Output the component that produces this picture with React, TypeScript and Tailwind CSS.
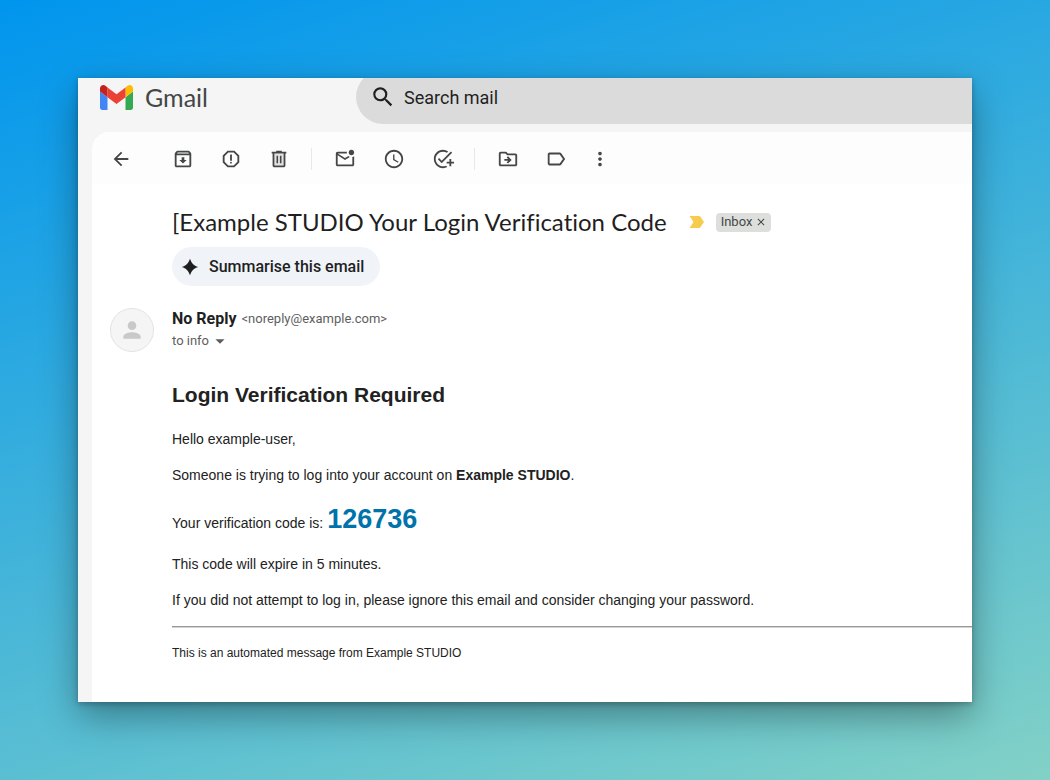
import type { ReactNode } from 'react'
import {
  MdAccessTime,
  MdArrowBack,
  MdArrowDropDown,
  MdClose,
  MdLabelOutline,
  MdMoreVert,
  MdOutlineAddTask,
  MdOutlineArchive,
  MdOutlineDriveFileMove,
  MdOutlineMarkEmailUnread,
  MdOutlineReportGmailerrorred,
  MdPerson,
  MdSearch,
} from 'react-icons/md'

function GmailLogo() {
  return (
    <svg viewBox="52 42 88 66" className="h-[25px] w-[33px]" aria-hidden="true">
      <path fill="#4285f4" d="M58 108h14V74L52 59v43c0 3.32 2.69 6 6 6" />
      <path fill="#34a853" d="M120 108h14c3.32 0 6-2.69 6-6V59l-20 15" />
      <path fill="#fbbc04" d="M120 48v26l20-15v-8c0-7.42-8.47-11.65-14.4-7.2" />
      <path fill="#ea4335" d="M72 74V48l24 18 24-18v26L96 92" />
      <path fill="#c5221f" d="M52 51v8l20 15V48l-5.6-4.2c-5.94-4.45-14.4-.22-14.4 7.2" />
    </svg>
  )
}

function TrashIcon() {
  return (
    <svg viewBox="0 0 24 24" className="size-[22px]" fill="currentColor" aria-hidden="true">
      <path opacity="0.15" d="M7 6h10v13H7z" />
      <path d="M15 4V3H9v1H4v2h1v13c0 1.1.9 2 2 2h10c1.1 0 2-.9 2-2V6h1V4h-5zm2 15H7V6h10v13zM9.300 8.500h1.700v8H9.300zm3.700 0h1.700v8H13z" />
    </svg>
  )
}

function ToolButton({ label, children }: { label: string; children: ReactNode }) {
  return (
    <button type="button" aria-label={label} className="size-[22px] shrink-0 cursor-pointer">
      {children}
    </button>
  )
}

function Toolbar() {
  return (
    <div className="flex h-[52px] items-center bg-[#fdfdfd] pl-[18px] pt-[2px] text-[#444746]">
      <ToolButton label="Back to inbox">
        <MdArrowBack className="size-[22px]" />
      </ToolButton>
      <div className="ml-10 flex gap-[26px]">
        <ToolButton label="Archive"><MdOutlineArchive className="size-[22px]" /></ToolButton>
        <ToolButton label="Report spam"><MdOutlineReportGmailerrorred className="size-[22px]" /></ToolButton>
        <ToolButton label="Delete"><TrashIcon /></ToolButton>
      </div>
      <div className="ml-[21px] h-[22px] w-px bg-[#e8e8e8]" />
      <div className="ml-[22px] flex gap-[27px]">
        <ToolButton label="Mark as unread"><MdOutlineMarkEmailUnread className="size-[22px]" /></ToolButton>
        <ToolButton label="Snooze"><MdAccessTime className="size-[22px]" /></ToolButton>
        <ToolButton label="Add to tasks"><MdOutlineAddTask className="size-[22px]" /></ToolButton>
      </div>
      <div className="ml-[20px] h-[22px] w-px bg-[#e8e8e8]" />
      <div className="ml-[22px] flex gap-[26px]">
        <ToolButton label="Move to"><MdOutlineDriveFileMove className="size-[22px]" /></ToolButton>
        <ToolButton label="Labels"><MdLabelOutline className="size-[22px]" /></ToolButton>
      </div>
      <div className="ml-[22px] flex">
        <ToolButton label="More"><MdMoreVert className="size-[22px]" /></ToolButton>
      </div>
    </div>
  )
}

function Header() {
  return (
    <header className="flex h-[54px] items-start bg-[#f5f5f5]">
      <div className="flex w-[278px] shrink-0 items-center gap-3 pl-[22px] pt-[3px]">
        <GmailLogo />
        <span className="font-['Lato',sans-serif] text-[25px] leading-8 text-[#444746]">Gmail</span>
      </div>
      <label className="-mt-2 flex h-[54px] flex-1 items-center gap-2 rounded-l-full bg-[#dbdbdb] pl-[14px]">
        <MdSearch className="size-[26px] text-[#1f1f1f]" />
        <input
          type="text"
          aria-label="Search mail"
          placeholder="Search mail"
          className="flex-1 bg-transparent font-['Roboto',sans-serif] text-[18px] text-[#1f1f1f] outline-none placeholder:text-[#1f1f1f]"
        />
      </label>
    </header>
  )
}

function EmailBody() {
  return (
    <div className="mt-[30px] font-['Liberation_Sans',Arial,sans-serif] text-[14px] leading-5 text-[#222]">
      <h2 className="text-[21px] font-bold leading-[26px]">Login Verification Required</h2>
      <div className="mt-[21px] flex flex-col gap-4">
        <p>Hello example-user,</p>
        <p>
          Someone is trying to log into your account on <strong>Example STUDIO</strong>.
        </p>
        <p>
          Your verification code is:{' '}
          <strong className="text-[27px] leading-[37px] text-[#0073aa]">126736</strong>
        </p>
        <p>This code will expire in 5 minutes.</p>
        <p>If you did not attempt to log in, please ignore this email and consider changing your password.</p>
      </div>
      <hr className="mt-4 border-t border-b border-t-[#999] border-b-[#d4d4d4]" />
      <p className="mt-[15px] text-[12px]">This is an automated message from Example STUDIO</p>
    </div>
  )
}

export default function App() {
  return (
    <div className="min-h-screen bg-[linear-gradient(162deg,#0095ee,#82d1c6)] p-[78px]">
      <main className="overflow-hidden bg-[#f5f5f5] shadow-[0_14px_34px_rgba(0,0,0,0.35),0_2px_6px_rgba(0,0,0,0.25)]">
        <Header />
        <section className="ml-[14px] overflow-hidden rounded-tl-[18px] bg-white pb-[39px]">
          <Toolbar />
          <div className="pl-20">
            <div className="mt-[22px] flex items-center">
              <h1 className="font-['Lato',sans-serif] text-[24px] leading-8 text-[#1f1f1f] [font-variant-ligatures:none]">
                [Example STUDIO Your Login Verification Code
              </h1>
              <svg viewBox="0 0 16 12" className="ml-[22px] h-3 w-4 text-[#f7cb4d]" fill="currentColor" role="img" aria-label="Important">
                <path d="M.5 0H10a1.5 1.5 0 0 1 1.200.6L15 6l-3.800 5.400a1.500 1.500 0 0 1-1.200.6H.5L4.500 6z" />
              </svg>
              <span className="ml-[11px] flex h-[19px] items-center rounded-[4px] bg-[#dddfdd] pl-[5px] pr-1 font-['Roboto',sans-serif] text-[13px] text-[#444746]">
                Inbox
                <button type="button" aria-label="Remove label" className="ml-[3px]">
                  <MdClose className="size-3" />
                </button>
              </span>
            </div>
            <button
              type="button"
              className="mt-[9px] flex h-[39px] items-center gap-2 rounded-full bg-[#f0f4f9] pl-[7px] pr-4 font-['Roboto',sans-serif] text-[16px] font-medium text-[#1f1f1f]"
            >
              <svg viewBox="0 0 24 24" className="size-[22px]" fill="currentColor" aria-hidden="true">
                <path d="M12 3c1.700 5 4 7.300 9 9-5 1.700-7.300 4-9 9-1.700-5-4-7.300-9-9 5-1.700 7.300-4 9-9z" />
              </svg>
              Summarise this email
            </button>
          </div>
          <div className="mt-[22px] flex gap-[18px] pl-[18px]">
            <div className="flex size-11 shrink-0 items-center justify-center rounded-full border border-[#e3e3e3] bg-[#f5f5f5]">
              <MdPerson className="size-[26px] text-[#c9c9c9]" />
            </div>
            <div className="flex-1">
              <div className="flex items-center gap-[5px] font-['Roboto',sans-serif] text-[13px] leading-[22px] text-[#5e5e5e]">
                <span className="text-[16px] font-bold text-[#1f1f1f]">No Reply</span>
                <span>&lt;noreply@example.com&gt;</span>
              </div>
              <button type="button" className="flex items-center font-['Roboto',sans-serif] text-[13px] leading-[22px] text-[#5e5e5e]">
                to info
                <MdArrowDropDown className="size-[22px]" />
              </button>
              <EmailBody />
            </div>
          </div>
        </section>
      </main>
    </div>
  )
}
